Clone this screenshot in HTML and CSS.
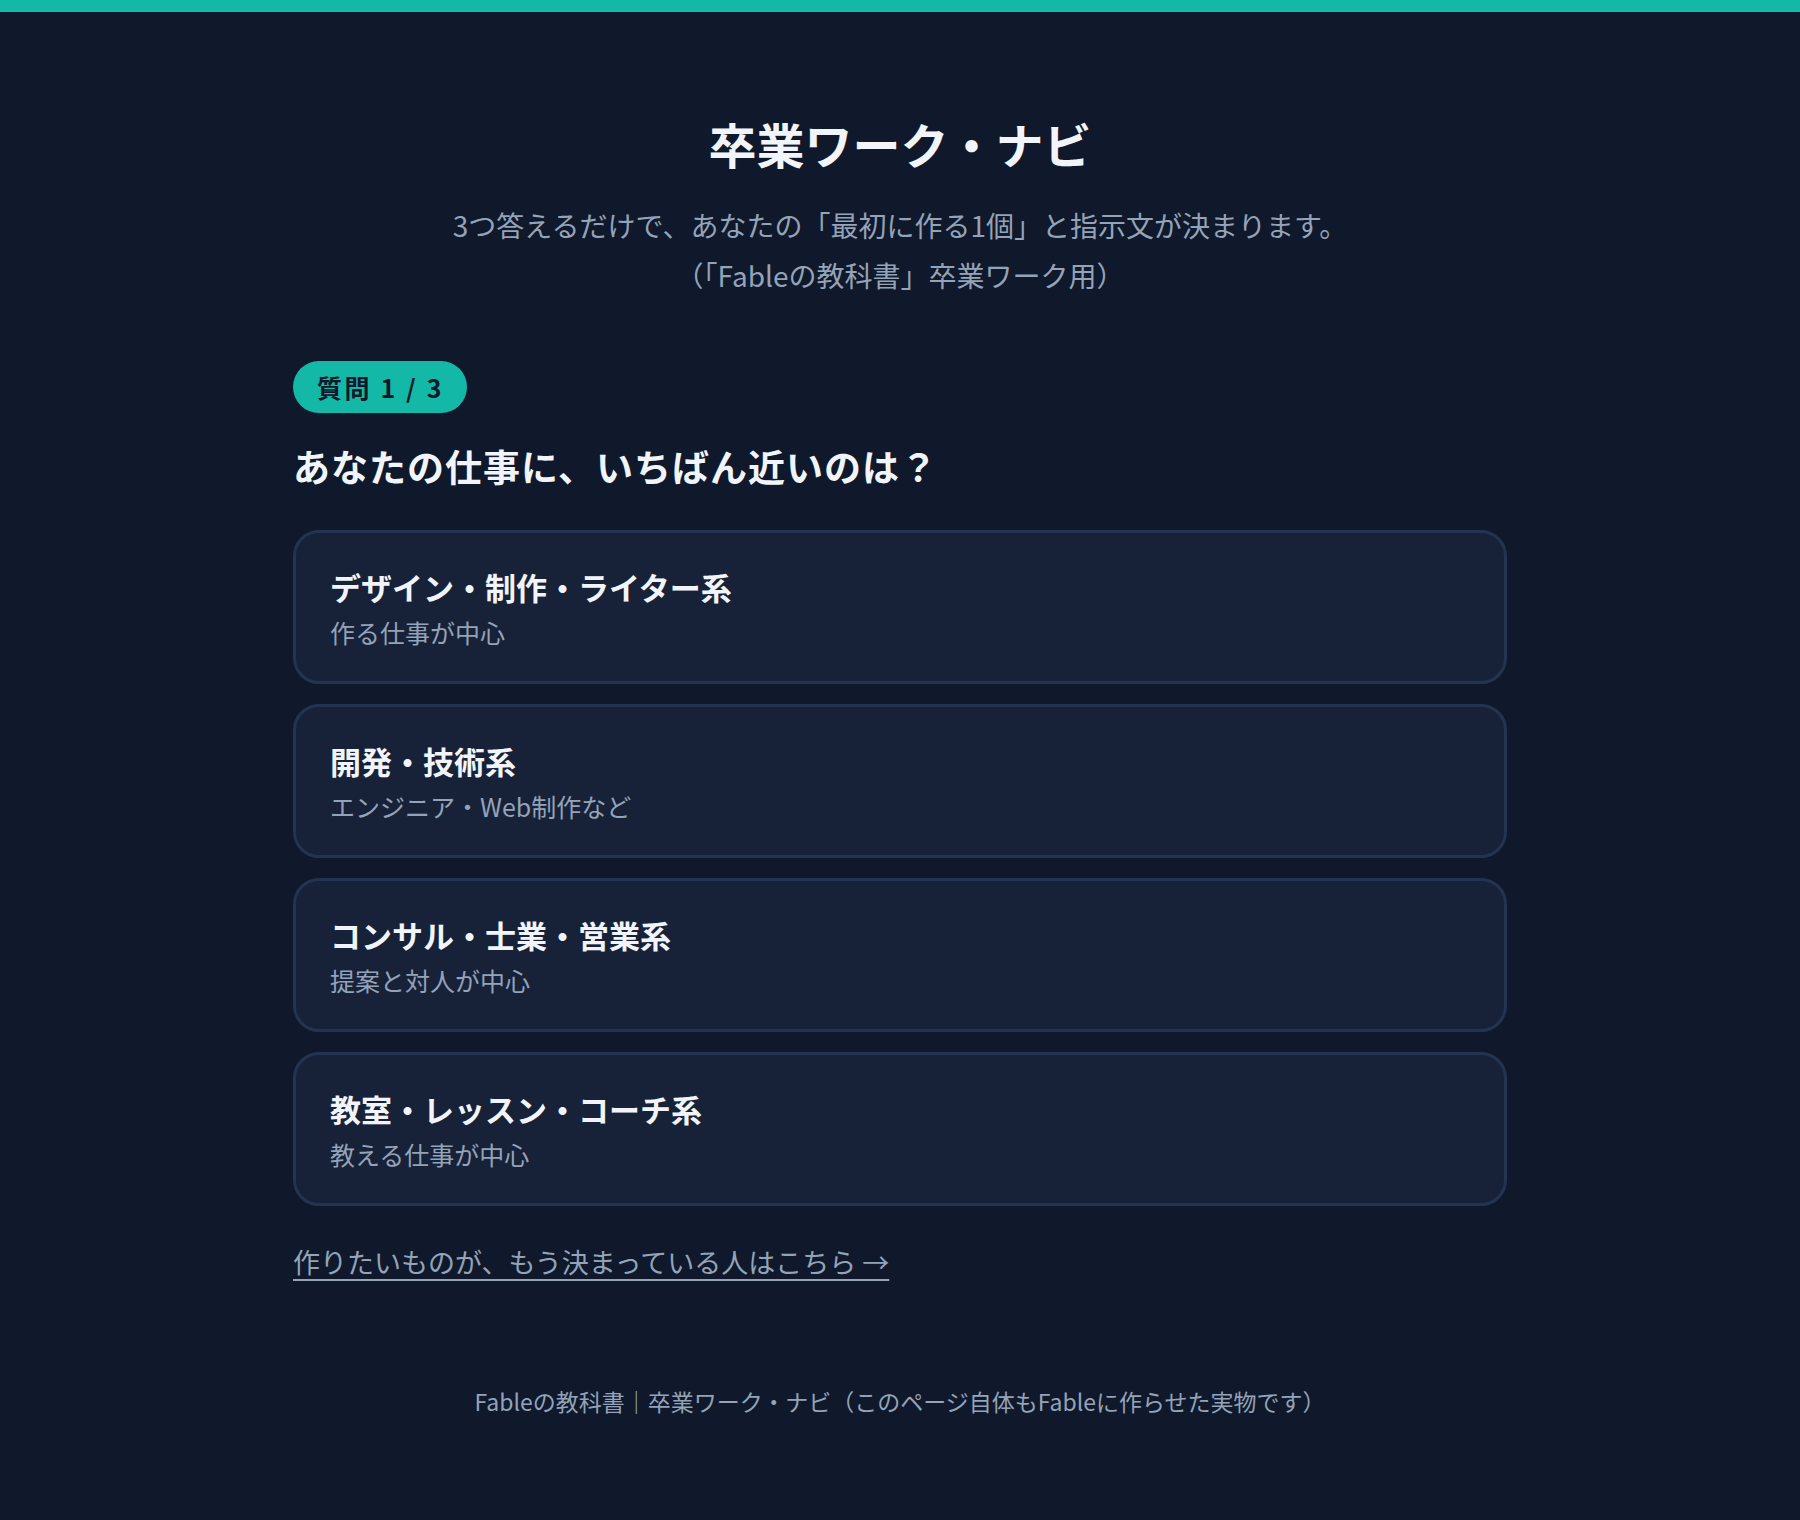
FILE: index.html
```html
<!DOCTYPE html>
<html lang="ja">
<head>
<meta charset="utf-8">
<title>卒業ワーク・ナビ</title>
<link rel="stylesheet" href="styles.css">
</head>
<body>
<div class="topbar"></div>
<main class="wrap">
  <header class="hero">
    <h1 class="title">卒業ワーク・ナビ</h1>
    <p class="lead">3つ答えるだけで、あなたの「最初に作る1個」と指示文が決まります。<br>（「Fableの教科書」卒業ワーク用）</p>
  </header>
  <section class="quiz">
    <span class="badge">質問 1 / 3</span>
    <h2 class="question">あなたの仕事に、いちばん近いのは？</h2>
    <div class="options">
      <button class="option"><span class="opt-title">デザイン・制作・ライター系</span><span class="opt-sub">作る仕事が中心</span></button>
      <button class="option"><span class="opt-title">開発・技術系</span><span class="opt-sub">エンジニア・Web制作など</span></button>
      <button class="option"><span class="opt-title">コンサル・士業・営業系</span><span class="opt-sub">提案と対人が中心</span></button>
      <button class="option"><span class="opt-title">教室・レッスン・コーチ系</span><span class="opt-sub">教える仕事が中心</span></button>
    </div>
    <a class="skip" href="#">作りたいものが、もう決まっている人はこちら →</a>
  </section>
  <footer class="foot">Fableの教科書｜卒業ワーク・ナビ（このページ自体もFableに作らせた実物です）</footer>
</main>
</body>
</html>
```
FILE: styles.css
```css
* { box-sizing: border-box; }
html, body {
  margin: 0;
  padding: 0;
  background: #0f192b;
}
body {
  font-family: "Noto Sans CJK JP", "Noto Sans", sans-serif;
  color: #f1f5f9;
  min-height: 1520px;
}
.topbar {
  height: 12px;
  background: #14b8a6;
}
.wrap {
  width: 1214px;
  margin: 0 auto;
}
.hero {
  text-align: center;
  padding-top: 100px;
}
.title {
  margin: 0;
  font-size: 48px;
  line-height: 62px;
  font-weight: 700;
  color: #f1f5f9;
}
.lead {
  margin: 26px 0 0;
  font-size: 28px;
  line-height: 50px;
  color: #94a3b8;
}
.quiz {
  margin-top: 61px;
  display: flex;
  flex-direction: column;
  align-items: flex-start;
}
.badge {
  display: inline-flex;
  align-items: center;
  height: 52px;
  padding: 0 23px 0 24px;
  border-radius: 26px;
  background: #14b8a6;
  color: #0f192b;
  font-size: 25px;
  font-weight: 700;
  letter-spacing: 2.6px;
}
.question {
  margin: 26px 0 0;
  font-size: 37px;
  line-height: 54px;
  font-weight: 700;
  color: #f1f5f9;
  letter-spacing: 1px;
}
.options {
  margin-top: 37px;
  width: 100%;
  display: flex;
  flex-direction: column;
  gap: 20px;
}
.option {
  display: flex;
  flex-direction: column;
  align-items: flex-start;
  width: 100%;
  padding: 33px 34px 30px;
  background: #172239;
  border: 3px solid #233350;
  border-radius: 26px;
  font-family: inherit;
  text-align: left;
  cursor: pointer;
}
.opt-title {
  font-size: 31px;
  line-height: 42px;
  font-weight: 700;
  color: #f1f5f9;
}
.opt-sub {
  margin-top: 5px;
  font-size: 25px;
  line-height: 38px;
  color: #94a3b8;
}
.skip {
  margin-top: 35px;
  font-size: 27px;
  line-height: 42px;
  color: #94a3b8;
  text-decoration: underline;
  text-underline-offset: 6px;
  text-decoration-thickness: 2px;
}
.foot {
  margin-top: 101px;
  text-align: center;
  font-size: 23px;
  line-height: 35px;
  color: #94a3b8;
}
```
